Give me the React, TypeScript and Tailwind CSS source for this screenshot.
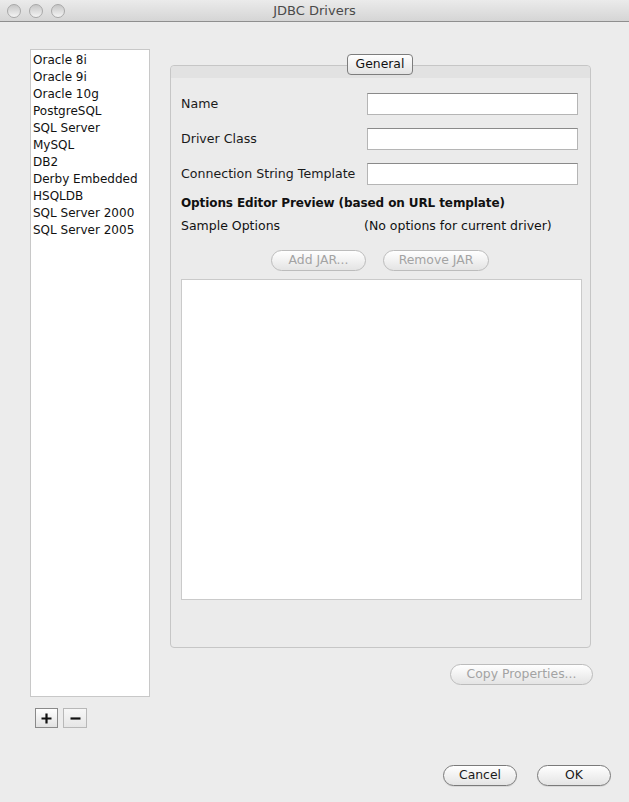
import React from "react";

const drivers = [
  "Oracle 8i",
  "Oracle 9i",
  "Oracle 10g",
  "PostgreSQL",
  "SQL Server",
  "MySQL",
  "DB2",
  "Derby Embedded",
  "HSQLDB",
  "SQL Server 2000",
  "SQL Server 2005",
];

function TrafficLight() {
  return (
    <span className="w-[14px] h-[14px] rounded-full border border-[#a8a8a8] bg-gradient-to-b from-[#c6c6c6] to-[#f4f4f4]" />
  );
}

function PillButton({
  children,
  disabled,
  className = "",
}: {
  children: React.ReactNode;
  disabled?: boolean;
  className?: string;
}) {
  return (
    <button
      className={
        "h-[21px] rounded-full border bg-gradient-to-b from-white to-[#e4e4e4] text-[12.4px] leading-none flex items-center justify-center " +
        (disabled
          ? "border-[#bcbcbc] text-[#a3a3a3]"
          : "border-[#7a7a7a] text-[#1a1a1a] shadow-[0_1px_0_rgba(0,0,0,0.08)]") +
        " " +
        className
      }
    >
      {children}
    </button>
  );
}

function Field({ label }: { label: string }) {
  return (
    <div className="flex items-center h-[22px] pr-[12px]">
      <span className="flex-1 text-[12.6px] text-[#1a1a1a]">{label}</span>
      <div className="w-[211px] h-[22px] bg-white border border-[#b5b5b5] border-t-[#8a8a8a]" />
    </div>
  );
}

export default function App() {
  return (
    <div
      className="w-[629px] h-[802px] bg-[#ececec] flex flex-col overflow-hidden"
      style={{ fontFamily: '"DejaVu Sans", "Liberation Sans", sans-serif' }}
    >
      {/* title bar */}
      <div className="h-[22px] shrink-0 relative flex items-center bg-gradient-to-b from-[#ebebeb] to-[#d5d5d5] border-b border-[#8f8f8f]">
        <div className="flex gap-[8px] pl-[7px]">
          <TrafficLight />
          <TrafficLight />
          <TrafficLight />
        </div>
        <div className="absolute inset-0 flex items-center justify-center text-[13px] text-[#4a4a4a]">
          JDBC Drivers
        </div>
      </div>

      <div className="flex flex-1 min-h-0 flex-col">
        <div className="flex">
          {/* left list */}
          <div className="pl-[30px] pt-[27px] flex flex-col">
            <div className="w-[120px] h-[648px] bg-white border border-[#c8c8c8] pt-[1px] pl-[2px]">
              {drivers.map((d) => (
                <div key={d} className="h-[17px] flex items-center text-[12px] text-[#111]">
                  {d}
                </div>
              ))}
            </div>
            <div className="flex gap-[5px] mt-[11px] pl-[5px]">
              <button className="w-[23px] h-[20px] border border-[#8a8a8a] bg-gradient-to-b from-white to-[#e2e2e2] flex items-center justify-center">
                <svg width="13" height="13" viewBox="0 0 13 13">
                  <path d="M6.5 1.5v10M1.5 6.5h10" stroke="#111" strokeWidth="2.2" />
                </svg>
              </button>
              <button className="w-[24px] h-[20px] border border-[#b8b8b8] bg-gradient-to-b from-[#f7f7f7] to-[#e6e6e6] flex items-center justify-center">
                <svg width="13" height="13" viewBox="0 0 13 13">
                  <path d="M1.5 6.5h10" stroke="#111" strokeWidth="2.2" />
                </svg>
              </button>
            </div>
          </div>

          {/* right side */}
          <div className="ml-[20px] pt-[43px] w-[423px] flex flex-col">
            <div className="relative w-[421px] h-[583px] rounded-[4px] border border-[#c6c6c6] bg-[#ebebeb] flex flex-col">
              <div className="absolute -top-[12px] left-[176px] w-[66px] h-[21px] rounded-[4px] border border-[#7d7d7d] bg-gradient-to-b from-white to-[#e3e3e3] flex items-center justify-center text-[12.4px] text-[#111]">
                General
              </div>
              <div className="h-[12px] bg-[#e2e2e2] rounded-t-[4px]" />
              <div className="pl-[10px] pt-[15px] flex flex-col gap-[13px]">
                <Field label="Name" />
                <Field label="Driver Class" />
                <Field label="Connection String Template" />
              </div>
              <div className="pl-[10px] mt-[10px] text-[12px] font-bold text-[#111] h-[16px] flex items-center tracking-[-0.1px]">
                Options Editor Preview (based on URL template)
              </div>
              <div className="pl-[10px] mt-[7px] flex items-center h-[16px] text-[12.5px] text-[#111]">
                <span className="w-[183px]">Sample Options</span>
                <span>(No options for current driver)</span>
              </div>
              <div className="mt-[16px] flex gap-[17px] pl-[100px]">
                <PillButton disabled className="w-[95px]">
                  Add JAR...
                </PillButton>
                <PillButton disabled className="w-[106px]">
                  Remove JAR
                </PillButton>
              </div>
              <div className="mt-[8px] ml-[10px] w-[401px] h-[321px] bg-white border border-[#cacaca]" />
            </div>
            <div className="mt-[16px] flex justify-end">
              <PillButton disabled className="w-[143px]">
                Copy Properties...
              </PillButton>
            </div>
          </div>
        </div>

        <div className="mt-auto pb-[16px] pr-[18px] flex justify-end gap-[20px]">
          <PillButton className="w-[74px]">Cancel</PillButton>
          <PillButton className="w-[74px]">OK</PillButton>
        </div>
      </div>
    </div>
  );
}
